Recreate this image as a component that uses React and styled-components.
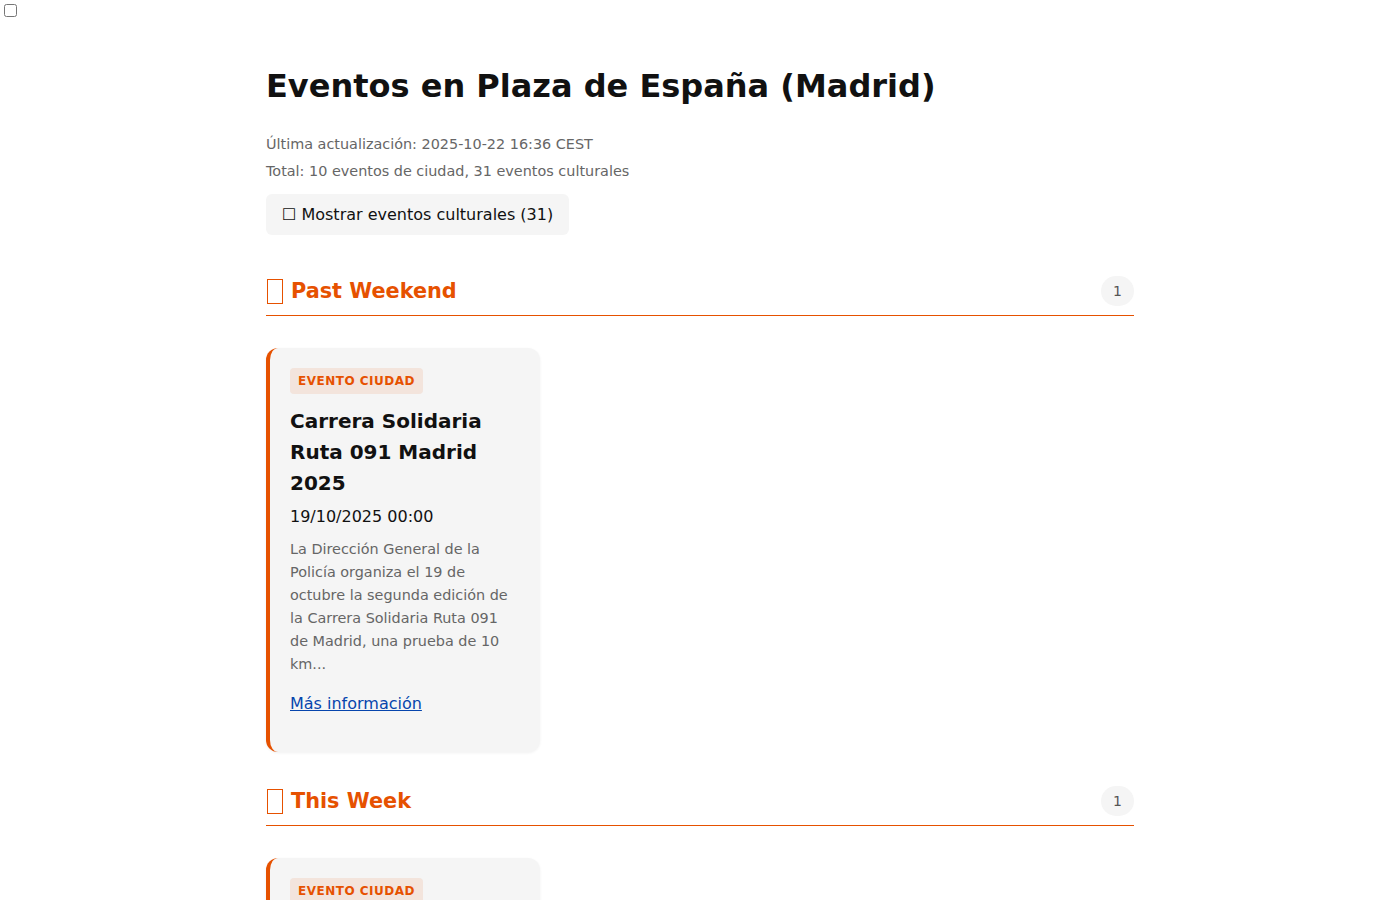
import React, { useState } from "react"
import styled, { createGlobalStyle } from "styled-components"

const orange = "#e65100"

const GlobalStyle = createGlobalStyle`
  body {
    margin: 0;
    background: #fff;
    font-family: "DejaVu Sans", sans-serif;
    color: #111;
  }
`

const ToggleBox = styled.input`
  display: block;
  width: 13px;
  height: 13px;
  margin: 4px;
`

const Page = styled.main`
  max-width: 868px;
  margin: 0 auto;
  padding: 46px 0 60px;
`

const Title = styled.h1`
  font-size: 32px;
  line-height: 38px;
  font-weight: bold;
  margin: 0 0 30px;
  color: #111;
`

const Meta = styled.p`
  font-size: 14.4px;
  line-height: 19px;
  color: #666;
  margin: 8px 0;
`

const ToggleButton = styled.button`
  display: block;
  margin: 13px 0 41px;
  padding: 11px 16px;
  font-family: inherit;
  font-size: 16px;
  line-height: 19px;
  color: #111;
  background: #f5f5f5;
  border: none;
  border-radius: 6px;
  cursor: pointer;
`

const Section = styled.section`
  margin-bottom: 34px;
`

const SectionHeader = styled.div`
  display: flex;
  align-items: center;
  justify-content: space-between;
  padding-bottom: 9px;
  border-bottom: 1px solid ${orange};
`

const SectionTitle = styled.h2`
  display: flex;
  align-items: center;
  gap: 8px;
  margin: 0;
  font-size: 20.8px;
  line-height: 30px;
  font-weight: bold;
  color: ${orange};
`

// the icon glyph has no font here, so it shows as an empty box
const MissingGlyph = styled.span`
  display: inline-block;
  box-sizing: border-box;
  width: 16px;
  height: 25px;
  border: 1.5px solid ${orange};
  margin-left: 1px;
`

const Count = styled.span`
  min-width: 9px;
  padding: 6px 12px;
  font-size: 14px;
  line-height: 18px;
  color: #555;
  background: #f5f5f5;
  border-radius: 16px;
  text-align: center;
`

const Grid = styled.div`
  display: grid;
  grid-template-columns: repeat(3, 1fr);
  gap: 23px;
  margin-top: 32px;
`

const Card = styled.article`
  background: #f5f5f5;
  border-left: 4px solid ${orange};
  border-radius: 12px;
  padding: 20px;
  box-shadow: 0 1px 3px rgba(0, 0, 0, 0.06);
`

const Tag = styled.span`
  display: inline-block;
  padding: 4px 8px;
  font-size: 12px;
  line-height: 18px;
  font-weight: bold;
  letter-spacing: 0.5px;
  text-transform: uppercase;
  color: ${orange};
  background: rgba(230, 81, 0, 0.1);
  border-radius: 4px;
`

const CardTitle = styled.h3`
  margin: 12px 0 6px;
  font-size: 20px;
  line-height: 31px;
  font-weight: bold;
  color: #111;
`

const CardDate = styled.div`
  font-size: 16px;
  line-height: 24px;
  color: #111;
`

const CardText = styled.p`
  margin: 9px 0 16px;
  font-size: 14.4px;
  line-height: 23px;
  color: #666;
`

const MoreLink = styled.a`
  display: block;
  margin-bottom: 16px;
  font-size: 16px;
  line-height: 24px;
  color: #0645ad;
  text-decoration: underline;
`

const sections = [
  {
    name: "Past Weekend",
    events: [
      {
        title: "Carrera Solidaria Ruta 091 Madrid 2025",
        date: "19/10/2025 00:00",
        text:
          "La Dirección General de la Policía organiza el 19 de octubre la segunda edición de la Carrera Solidaria Ruta 091 de Madrid, una prueba de 10 km...",
      },
    ],
  },
  {
    name: "This Week",
    events: [
      {
        title: "Mercado de Artesanía en Plaza de España",
        date: "24/10/2025 11:00",
        text:
          "Vuelve el mercado de artesanía a la Plaza de España con puestos de cerámica, joyería, textil y productos tradicionales...",
      },
    ],
  },
]

const EventCard = ({ event }) => (
  <Card>
    <Tag>Evento ciudad</Tag>
    <CardTitle>{event.title}</CardTitle>
    <CardDate>{event.date}</CardDate>
    <CardText>{event.text}</CardText>
    <MoreLink href="#">Más información</MoreLink>
  </Card>
)

const App = () => {
  const [showCultural, setShowCultural] = useState(false)

  return (
    <>
      <GlobalStyle />
      <ToggleBox
        type="checkbox"
        checked={showCultural}
        onChange={e => setShowCultural(e.target.checked)}
      />
      <Page>
        <Title>Eventos en Plaza de España (Madrid)</Title>
        <Meta>Última actualización: 2025-10-22 16:36 CEST</Meta>
        <Meta>Total: 10 eventos de ciudad, 31 eventos culturales</Meta>
        <ToggleButton onClick={() => setShowCultural(!showCultural)}>
          {showCultural ? "☑" : "☐"} Mostrar eventos culturales (31)
        </ToggleButton>
        {sections.map(section => (
          <Section key={section.name}>
            <SectionHeader>
              <SectionTitle>
                <MissingGlyph />
                {section.name}
              </SectionTitle>
              <Count>{section.events.length}</Count>
            </SectionHeader>
            <Grid>
              {section.events.map(event => (
                <EventCard key={event.title} event={event} />
              ))}
            </Grid>
          </Section>
        ))}
      </Page>
    </>
  )
}

export default App
